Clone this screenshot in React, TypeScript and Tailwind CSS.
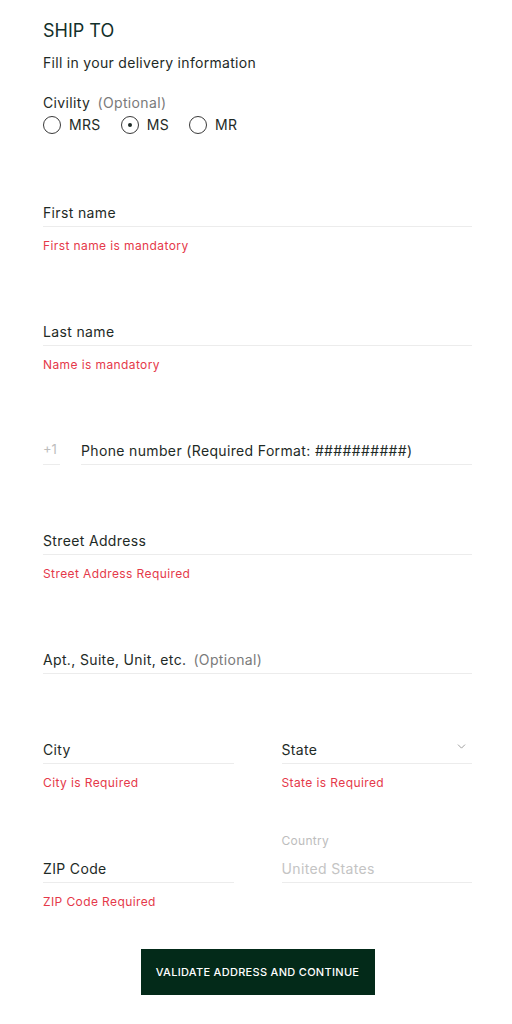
import { ChevronDown } from 'lucide-react'

const font = { fontFamily: 'Inter, "Noto Sans", "Liberation Sans", sans-serif' }

interface FieldProps {
  label: string
  optional?: boolean
  error?: string
  select?: boolean
}

function Field({ label, optional, error, select }: FieldProps) {
  return (
    <div className="flex flex-col">
      <div className="flex h-[29px] items-center justify-between border-b border-[#ececec]">
        <span className="text-[14px] tracking-[0.35px] text-[#1e2a26]">
          {label}
          {optional && <span className="ml-[7px] text-[#7a7a7a]">(Optional)</span>}
        </span>
        {select && <ChevronDown size={13} strokeWidth={1.5} className="mr-[4px] mb-[5px] text-[#8a8a8a]" />}
      </div>
      {error && (
        <div className="mt-[10px] pb-[1px] text-[12px] leading-[18px] tracking-[0.4px] text-[#e5394a]">{error}</div>
      )}
    </div>
  )
}

function Radio({ label, checked }: { label: string; checked?: boolean }) {
  return (
    <label className="flex items-center gap-[8px]">
      <span className="flex h-[18px] w-[18px] items-center justify-center rounded-full border border-[#3a3a3a]">
        {checked && <span className="h-[4px] w-[4px] rounded-full bg-[#1e2a26]" />}
      </span>
      <span className="text-[14px] tracking-[0.35px] text-[#1e2a26]">{label}</span>
    </label>
  )
}

export default function App() {
  return (
    <div className="min-h-screen bg-white pl-[43px] pr-[40px] pt-[19px]" style={font}>
      <h1 className="text-[18px] leading-[24px] text-[#12302a]">SHIP TO</h1>
      <p className="mt-[10px] text-[14px] leading-[20px] tracking-[0.3px] text-[#1e2a26]">
        Fill in your delivery information
      </p>

      <div className="mt-[20px] text-[14px] leading-[20px] tracking-[0.35px] text-[#1e2a26]">
        Civility <span className="ml-[3px] text-[#7a7a7a]">(Optional)</span>
      </div>
      <div className="mt-[2px] flex gap-[20px] leading-[20px]">
        <Radio label="MRS" />
        <Radio label="MS" checked />
        <Radio label="MR" />
      </div>

      <div className="mt-[63px] flex flex-col gap-[61px]">
        <Field label="First name" error="First name is mandatory" />
        <Field label="Last name" error="Name is mandatory" />

        <div className="flex gap-[21px]">
          <div className="flex h-[29px] w-[17px] items-center border-b border-[#ececec] text-[13px] text-[#bdbdbd]">+1</div>
          <div className="flex-1">
            <Field label="Phone number (Required Format: ##########)" />
          </div>
        </div>

        <Field label="Street Address" error="Street Address Required" />
        <Field label="Apt., Suite, Unit, etc." optional />

        <div className="grid grid-cols-2 gap-x-[48px]">
          <Field label="City" error="City is Required" />
          <Field label="State" error="State is Required" select />
        </div>

        <div className="grid grid-cols-2 gap-x-[48px]">
          <Field label="ZIP Code" error="ZIP Code Required" />
          <div className="relative">
            <span className="absolute -top-[21px] left-0 text-[12px] leading-[16px] tracking-[0.3px] text-[#bdbdbd]">
              Country
            </span>
            <div className="flex h-[29px] items-center border-b border-[#ececec] text-[14px] tracking-[0.35px] text-[#c4c4c4]">
              United States
            </div>
          </div>
        </div>
      </div>

      <div className="mt-[37px] flex justify-center pb-[29px]">
        <button className="h-[46px] w-[234px] bg-[#032a19] text-[11px] font-medium tracking-[0.3px] text-white">
          VALIDATE ADDRESS AND CONTINUE
        </button>
      </div>
    </div>
  )
}
